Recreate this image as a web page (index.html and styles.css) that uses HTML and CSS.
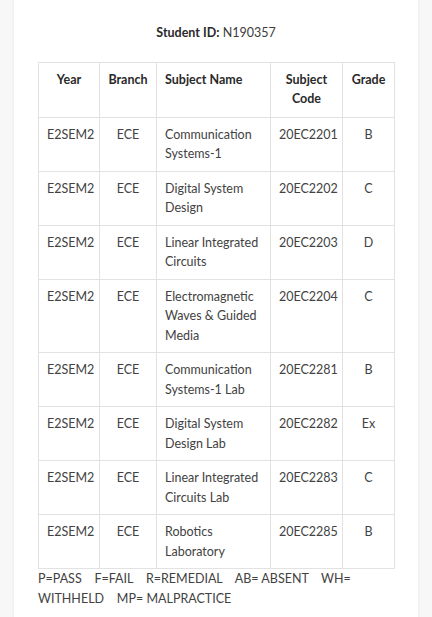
FILE: index.html
```html
<!DOCTYPE html>
<html lang="en">
<head>
<meta charset="utf-8">
<title>Result</title>
<link rel="stylesheet" href="styles.css">
</head>
<body>
<div class="card">
  <p class="student-id"><strong>Student ID:</strong> N190357</p>
  <table class="results">
    <colgroup>
      <col class="c-year"><col class="c-branch"><col class="c-name"><col class="c-code"><col class="c-grade">
    </colgroup>
    <thead>
      <tr><th>Year</th><th>Branch</th><th class="left">Subject Name</th><th>Subject Code</th><th>Grade</th></tr>
    </thead>
    <tbody>
      <tr><td>E2SEM2</td><td>ECE</td><td class="left">Communication Systems-1</td><td>20EC2201</td><td>B</td></tr>
      <tr><td>E2SEM2</td><td>ECE</td><td class="left">Digital System Design</td><td>20EC2202</td><td>C</td></tr>
      <tr><td>E2SEM2</td><td>ECE</td><td class="left">Linear Integrated Circuits</td><td>20EC2203</td><td>D</td></tr>
      <tr><td>E2SEM2</td><td>ECE</td><td class="left">Electromagnetic Waves &amp; Guided Media</td><td>20EC2204</td><td>C</td></tr>
      <tr><td>E2SEM2</td><td>ECE</td><td class="left">Communication Systems-1 Lab</td><td>20EC2281</td><td>B</td></tr>
      <tr><td>E2SEM2</td><td>ECE</td><td class="left">Digital System Design Lab</td><td>20EC2282</td><td>Ex</td></tr>
      <tr><td>E2SEM2</td><td>ECE</td><td class="left">Linear Integrated Circuits Lab</td><td>20EC2283</td><td>C</td></tr>
      <tr><td>E2SEM2</td><td>ECE</td><td class="left">Robotics Laboratory</td><td>20EC2285</td><td>B</td></tr>
    </tbody>
  </table>
  <p class="legend">P=PASS&nbsp;&nbsp;&nbsp; F=FAIL&nbsp;&nbsp;&nbsp; R=REMEDIAL&nbsp;&nbsp;&nbsp; AB= ABSENT&nbsp;&nbsp;&nbsp; WH= WITHHELD&nbsp;&nbsp;&nbsp; MP= MALPRACTICE</p>
</div>
</body>
</html>
```
FILE: styles.css
```css
html, body {
  margin: 0;
  padding: 0;
}
body {
  background: #f7f7f7;
  font-family: "Lato", "Open Sans", sans-serif;
  font-size: 12.5px;
  line-height: 19.5px;
  color: #424242;
}
.card {
  width: 404px;
  margin-left: 14px;
  box-sizing: border-box;
  background: #ffffff;
  box-shadow: 0 0 3px rgba(0,0,0,0.08);
  padding: 23px 24px 20px 24px;
  min-height: 617px;
}
.student-id {
  margin: 0 0 19px 0;
  text-align: center;
  color: #3c3c3c;
}
.student-id strong {
  font-weight: 700;
  color: #2a2a2a;
}
.results {
  width: 356px;
  border-collapse: collapse;
  table-layout: fixed;
}
.c-year { width: 61px; }
.c-branch { width: 57px; }
.c-name { width: 114px; }
.c-code { width: 72px; }
.c-grade { width: 52px; }
.results th,
.results td {
  border: 1px solid #e2e2e2;
  padding: 7px 8px;
  text-align: center;
  vertical-align: top;
}
.results th {
  font-weight: 700;
  color: #2a2a2a;
  padding-bottom: 8px;
}
.results .left {
  text-align: left;
}
.legend {
  margin: 0;
  color: #424242;
}
```
